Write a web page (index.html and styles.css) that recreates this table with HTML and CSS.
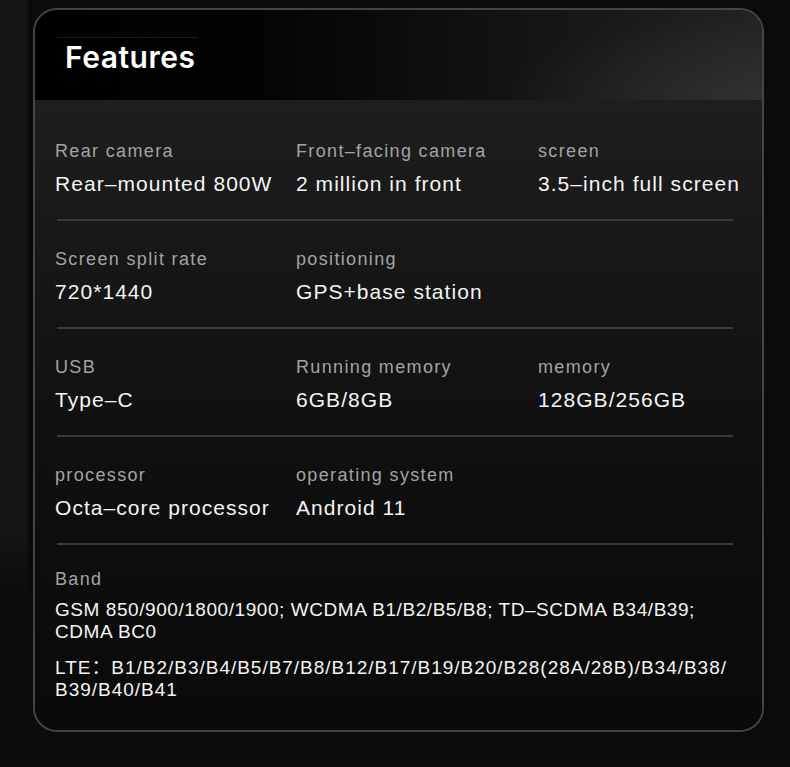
FILE: index.html
```html
<!DOCTYPE html>
<html lang="en">
<head>
<meta charset="utf-8">
<title>Features</title>
<link rel="stylesheet" href="styles.css">
</head>
<body>
<div class="page">
  <section class="card">
    <header class="card-head">
      <h1 class="title">Features</h1>
    </header>
    <div class="card-body">
      <div class="row row-first">
        <div class="cell"><div class="label">Rear camera</div><div class="value">Rear–mounted 800W</div></div>
        <div class="cell"><div class="label">Front–facing camera</div><div class="value">2 million in front</div></div>
        <div class="cell"><div class="label">screen</div><div class="value">3.5–inch full screen</div></div>
      </div>
      <div class="row">
        <div class="cell"><div class="label">Screen split rate</div><div class="value">720*1440</div></div>
        <div class="cell"><div class="label">positioning</div><div class="value">GPS+base station</div></div>
        <div class="cell"></div>
      </div>
      <div class="row">
        <div class="cell"><div class="label">USB</div><div class="value">Type–C</div></div>
        <div class="cell"><div class="label">Running memory</div><div class="value">6GB/8GB</div></div>
        <div class="cell"><div class="label">memory</div><div class="value">128GB/256GB</div></div>
      </div>
      <div class="row">
        <div class="cell"><div class="label">processor</div><div class="value">Octa–core processor</div></div>
        <div class="cell"><div class="label">operating system</div><div class="value">Android 11</div></div>
        <div class="cell"></div>
      </div>
      <div class="band">
        <div class="label">Band</div>
        <p class="band-text">GSM 850/900/1800/1900; WCDMA B1/B2/B5/B8; TD–SCDMA B34/B39;<br>CDMA BC0</p>
        <p class="band-text band-lte">LTE：B1/B2/B3/B4/B5/B7/B8/B12/B17/B19/B20/B28(28A/28B)/B34/B38/<br>B39/B40/B41</p>
      </div>
    </div>
  </section>
</div>
</body>
</html>
```

FILE: styles.css
```css
* { box-sizing: border-box; }

html, body {
  margin: 0;
  padding: 0;
}

body {
  width: 790px;
  height: 767px;
  overflow: hidden;
  background:
    linear-gradient(to bottom, rgba(11, 11, 11, 0) 530px, #0b0b0b 600px),
    linear-gradient(to right, #151515 0, #151515 26px, #070707 30px, #0b0b0b 34px, #0b0b0b 100%);
  font-family: "Liberation Sans", Arial, "Noto Sans CJK SC", sans-serif;
  color: #f2f2f2;
}

.page {
  padding: 8px 26px 35px 33px;
}

.card {
  width: 731px;
  height: 724px;
  border: 2px solid #454545;
  border-radius: 24px;
  overflow: hidden;
  display: flex;
  flex-direction: column;
  background: #0c0c0c;
}

.card-head {
  height: 90px;
  padding: 27px 0 0 22px;
  background:
    radial-gradient(ellipse 260px 90px at 100% 100%, rgba(60, 60, 60, 0.55), rgba(60, 60, 60, 0) 100%),
    linear-gradient(to right, #000 0%, #030303 30%, #111 60%, #222 100%);
}

.title {
  margin: 0;
  width: 141px;
  padding: 1px 0 0 8px;
  border-top: 1px solid #1c1c1c;
  font-family: Inter, "Liberation Sans", Arial, sans-serif;
  font-size: 30px;
  line-height: 36px;
  font-weight: 600;
  letter-spacing: 0.5px;
  color: #ffffff;
}

.card-body {
  flex: 1;
  padding: 13px 29px 0 20px;
  background: linear-gradient(180deg, #1e1e1e 0%, #171717 25%, #0f0f0f 60%, #0a0a0a 100%);
}

.row {
  display: grid;
  grid-template-columns: 241px 242px 1fr;
  padding: 26px 0 21px;
  border-bottom: 2px solid #3a3a3a;
  margin-left: 2px;
}

.row .cell {
  margin-left: -2px;
}

.row-first {
  padding-top: 26px;
}

.label {
  font-size: 18px;
  line-height: 24px;
  letter-spacing: 1.35px;
  color: #a3a3a3;
}

.value {
  margin-top: 7px;
  font-size: 21px;
  line-height: 28px;
  letter-spacing: 1.05px;
  color: #f4f4f4;
  white-space: nowrap;
}

.band {
  padding-top: 22px;
}

.band-text {
  margin: 8px 0 0;
  font-size: 19px;
  line-height: 22px;
  letter-spacing: 0.56px;
  color: #f4f4f4;
  white-space: nowrap;
}

.band-text + .band-text {
  margin-top: 14px;
}

.band-lte {
  letter-spacing: 0.98px;
}
```
